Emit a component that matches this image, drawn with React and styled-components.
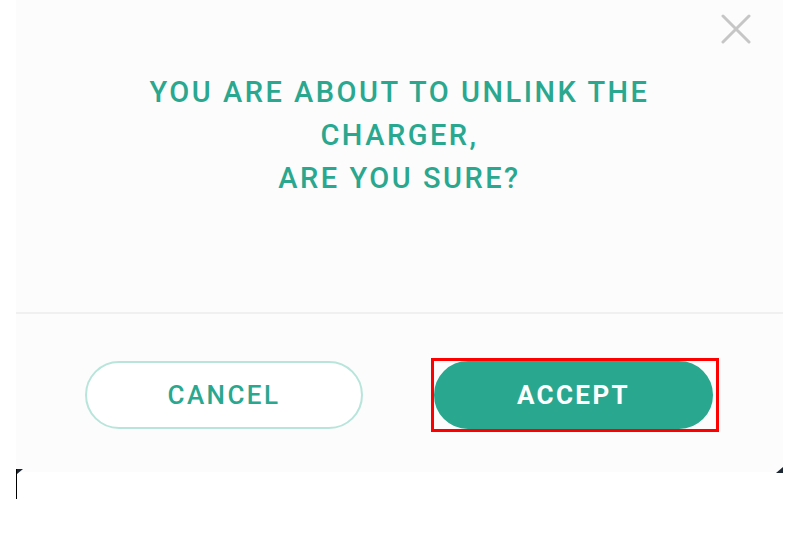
import React from "react";
import styled, { createGlobalStyle } from "styled-components";

const GlobalStyle = createGlobalStyle`
  html, body {
    margin: 0;
    padding: 0;
    background: #ffffff;
    font-family: Roboto, "Liberation Sans", sans-serif;
  }
`;

const Page = styled.div`
  position: relative;
  width: 811px;
  height: 547px;
  padding-left: 16px;
  box-sizing: border-box;
`;

const Modal = styled.div`
  position: relative;
  width: 767px;
  height: 472px;
  background: #fcfcfc;
  display: flex;
  flex-direction: column;
`;

const Body = styled.div`
  height: 314px;
  flex-shrink: 0;
  display: flex;
  justify-content: center;
  padding-top: 71px;
  box-sizing: border-box;
  border-bottom: 2px solid #f0f0f0;
`;

const Title = styled.h2`
  margin: 0;
  max-width: 600px;
  text-align: center;
  color: #2aa88f;
  font-size: 29px;
  font-weight: 500;
  line-height: 43px;
  letter-spacing: 2.5px;
  text-transform: uppercase;
`;

const Close = styled.button`
  position: absolute;
  top: 14px;
  right: 32px;
  width: 30px;
  height: 30px;
  padding: 0;
  border: none;
  background: none;
  display: flex;
  align-items: center;
  justify-content: center;
`;

const Actions = styled.div`
  flex: 1;
  display: flex;
  align-items: flex-start;
  gap: 68px;
  padding: 47px 0 0 69px;
`;

const FocusFrame = styled.div`
  display: flex;
  width: 288px;
  height: 74px;
  box-sizing: border-box;
  margin-top: -3px;
  border: 3px solid #ff0000;
`;

const Button = styled.button`
  width: ${(p) => (p.$primary ? 279 : 278)}px;
  height: 68px;
  flex-shrink: 0;
  border-radius: 34px;
  box-sizing: border-box;
  font-family: Roboto, "Liberation Sans", sans-serif;
  font-size: 26px;
  font-weight: ${(p) => (p.$primary ? 700 : 500)};
  letter-spacing: 2.4px;
  text-transform: uppercase;
  border: 2px solid ${(p) => (p.$primary ? "#2aa88f" : "#b8e5da")};
  background: ${(p) => (p.$primary ? "#2aa88f" : "#ffffff")};
  color: ${(p) => (p.$primary ? "#ffffff" : "#2aa88f")};
  outline: none;
  padding: 0;
`;

const CaretLine = styled.div`
  position: absolute;
  left: 16px;
  top: 469px;
  width: 1px;
  height: 30px;
  background: #000;
  &::after {
    content: "";
    position: absolute;
    left: 1px;
    top: 0;
    border-top: 5px solid #1c2733;
    border-right: 6px solid transparent;
  }
`;

const CornerMark = styled.div`
  position: absolute;
  left: 776px;
  top: 467px;
  width: 0;
  height: 0;
  border-bottom: 6px solid #1c2733;
  border-left: 7px solid transparent;
`;

export default function App() {
  return (
    <>
      <GlobalStyle />
      <Page>
        <Modal>
          <Close aria-label="close">
            <svg width="30" height="30" viewBox="0 0 30 30">
              <path d="M2 2 L28 28 M28 2 L2 28" stroke="#c6c6c6" strokeWidth="3" strokeLinecap="round" />
            </svg>
          </Close>
          <Body>
            <Title>
              You are about to unlink the charger,
              <br />
              are you sure?
            </Title>
          </Body>
          <Actions>
            <Button>Cancel</Button>
            <FocusFrame>
              <Button $primary>Accept</Button>
            </FocusFrame>
          </Actions>
        </Modal>
        <CaretLine />
        <CornerMark />
      </Page>
    </>
  );
}
